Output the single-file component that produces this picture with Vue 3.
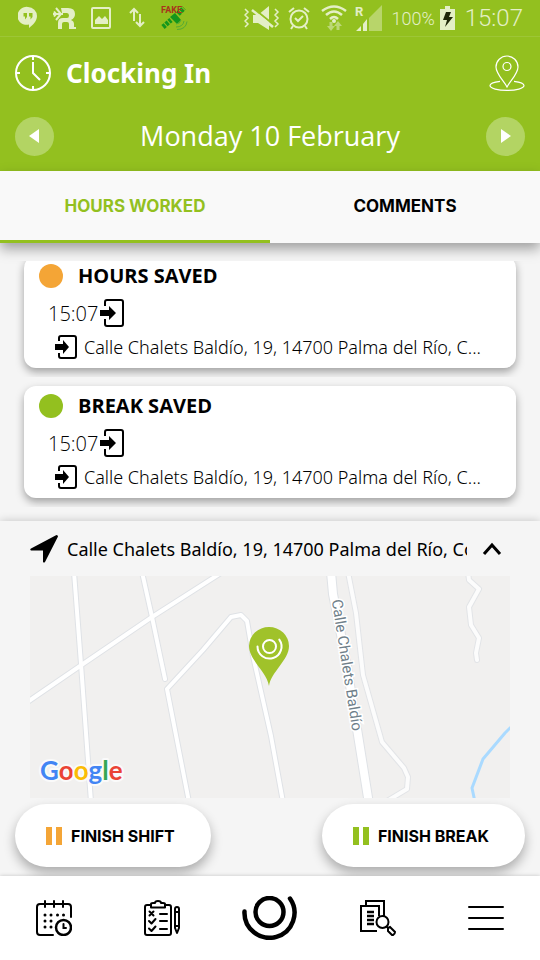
<script setup>
import { ref } from 'vue'

const tabs = ['HOURS WORKED', 'COMMENTS']
const activeTab = ref(0)

const address = 'Calle Chalets Baldío, 19, 14700 Palma del Río, '
const entries = [
  { title: 'HOURS SAVED', tone: 'orange', time: '15:07' },
  { title: 'BREAK SAVED', tone: 'green', time: '15:07' },
]
const roads = [
  'M44 -4 51 88 61 226',
  'M112 -4 122 41 131 84 135 103',
  'M194 -5 122 41 50 90 -4 127',
  'M159 226 137 113 173 74 201 41 211 39 217 45 223 80 241 160 253 226',
]
const paths = [
  'M318 -4 326 37 333 99 352 166 374 192 378 201 377 213 357 225',
  'M438 -4 439 4 449 13 439 31 441 49 449 62 446 77 447 84',
]
</script>

<template>
  <div class="app">
    <div class="status">
      <svg class="hangouts" width="20" height="24" viewBox="0 0 20 24">
        <path d="M10 1a9 9 0 0 1 9 9c0 5-4 9-8 12v-3.500A9 9 0 1 1 10 1z" fill="currentColor" />
        <path d="M5.500 7h3.500v4l-2 2.500v-3H5.500zM11 7h3.500v4l-2 2.500v-3H11z" fill="#93c01f" />
      </svg>
      <svg class="runner" width="23" height="24" viewBox="0 0 23 24" fill="none" stroke="currentColor">
        <path d="M0 8h10M3 2l5 6-5 6M1 5.500 3 8 1 10.500" stroke-width="2" />
        <path d="M8 2h7q7 0 7 6 0 4-4 6 3 1 3 4v3h2v2h-7v-5q0-2-2-2h-3q-2 0-2 2v5H5v-6q0-5 5-5h4q2 0 2-2.500T14 7H9z" fill="currentColor" stroke="none" />
      </svg>
      <svg class="picture" width="20" height="24" viewBox="0 0 20 24">
        <rect x="1" y="2" width="18" height="20" rx="1" fill="none" stroke="currentColor" stroke-width="2" />
        <path d="M4 18v-4l4-4 3 3 3-3 3 4v4z" fill="currentColor" />
      </svg>
      <svg class="transfer" width="16" height="24" viewBox="0 0 16 24" fill="none" stroke="currentColor" stroke-width="2">
        <path d="M5 15V4M1 7l4-4 4 4M11 8v11M7 16l4 4 4-4" />
      </svg>
      <svg class="satellite" width="28" height="26" viewBox="0 0 28 26">
        <path d="m2 22 8-7M17 9l6-6" stroke="#14961c" stroke-width="5" stroke-dasharray="3 1" />
        <path d="m9 12 5-4 6 7-4 4z" fill="#14961c" />
        <path d="M15 19q4 0 5-4M15 22q7 0 8-6M16 24.500q9 0 10-8" fill="none" stroke="#55aa35" />
        <text class="fake" x="0" y="8">FAKE</text>
      </svg>
      <span class="spacer"></span>
      <svg class="mute" width="36" height="26" viewBox="0 0 36 26">
        <path d="M1 4l3 3-3 3 3 3-3 3 3 3-3 3M31 4l3 3-3 3 3 3-3 3 3 3-3 3" fill="none" stroke="currentColor" stroke-width="1.500" />
        <path d="M9 10h5L25 1v24l-11-7H9z" fill="currentColor" />
        <path d="M9 3l21 17" stroke="#93c01f" stroke-width="2" />
        <path d="M8 5l21 17" stroke="currentColor" stroke-width="2.500" />
      </svg>
      <svg class="alarm" width="22" height="24" viewBox="0 0 22 24" fill="none" stroke="currentColor" stroke-width="2">
        <circle cx="11" cy="13" r="8.500" />
        <path d="M1 6l5-4M21 6l-5-4M5 20l-2 3M17 20l2 3M7 12l3 3 5-5" />
      </svg>
      <svg class="wifi" width="26" height="26" viewBox="0 0 26 26" fill="none" stroke="currentColor">
        <path d="M1 6q12-9 24 0M5 10q8-7 16 0M9 14q4-4 8 0" stroke-width="2.500" />
        <circle cx="13" cy="16" r="2" fill="currentColor" stroke="none" />
        <path d="M6 21l4 5 4-5h-2.500v-4h-3v4zM13 21l4-5 4 5h-2.500v4h-3v-4z" fill="#bcd876" stroke="none" />
      </svg>
      <svg class="signal" width="28" height="26" viewBox="0 0 28 26">
        <path d="M14 13 27 0v26H14z" fill="#b8d56a" />
        <path d="M8 19l4-5v12H8zM1 26l5-5v5z" fill="currentColor" />
        <text class="roaming" x="0" y="11">R</text>
      </svg>
      <span class="percent">100%</span>
      <svg class="battery" width="15" height="24" viewBox="0 0 15 24">
        <path d="M5 0h5v3h5v21H0V3h5z" fill="currentColor" />
        <path d="M6 6h5l-2 5h4L5 21l2-7H3z" fill="#1d2608" />
      </svg>
      <span class="clock">15:07</span>
    </div>

    <header class="header">
      <div class="title-row">
        <svg width="36" height="36" viewBox="0 0 36 36" fill="none" stroke="#fff" stroke-width="2">
          <circle cx="18" cy="18" r="17" />
          <path d="M18 1v4M18 31v4M1 18h4M31 18h4M18 7v11l7 7" />
        </svg>
        <h1>Clocking In</h1>
        <a href="#location" aria-label="Location">
          <svg width="36" height="36" viewBox="0 0 36 36" fill="none" stroke="#fff" stroke-width="1.200">
            <path d="M18 32C15 26 7 19 7 12a11 11 0 0 1 22 0c0 7-8 14-11 20z" />
            <circle cx="18" cy="11.500" r="4" />
            <path d="M11 26.300C5 27 1 28.500 1 30.500c0 3 8 4.900 17 4.900s17-1.900 17-4.900c0-2-4-3.500-10-4.200" />
          </svg>
        </a>
      </div>
      <div class="date-row">
        <button class="round" aria-label="Previous day">
          <svg width="12" height="14" viewBox="0 0 12 14"><path d="M10 0v14L0 7z" fill="#fff" /></svg>
        </button>
        <span class="date">Monday 10 February</span>
        <button class="round" aria-label="Next day">
          <svg width="10" height="14" viewBox="0 0 10 14"><path d="M0 0v14l10-7z" fill="#fff" /></svg>
        </button>
      </div>
    </header>

    <nav class="tabs">
      <button
        v-for="(tab, i) in tabs"
        :key="tab"
        class="tab"
        :class="{ active: i === activeTab }"
        @click="activeTab = i"
      >{{ tab }}</button>
    </nav>

    <main class="list">
      <div v-for="entry in entries" :key="entry.title" class="item">
        <article class="card">
          <div class="card-head">
            <span class="dot" :class="entry.tone"></span>
            <h2>{{ entry.title }}</h2>
          </div>
          <div class="card-time">
            <span>{{ entry.time }}</span>
            <svg width="24" height="28" viewBox="0 0 24 28">
              <path d="M5 7V3q0-2 2-2h14q2 0 2 2v22q0 2-2 2H7q-2 0-2-2v-5" fill="none" stroke="#000" stroke-width="2" />
              <path d="M0 11h9V7l7 7-7 7v-4H0z" />
            </svg>
          </div>
          <div class="card-address">
            <svg width="22" height="24" viewBox="0 0 22 24">
              <path d="M4 6V3q0-2 2-2h13q2 0 2 2v18q0 2-2 2H6q-2 0-2-2v-3" fill="none" stroke="#000" stroke-width="2" />
              <path d="M0 9h8V5l6 7-6 7v-4H0z" />
            </svg>
            <span>{{ address }}C...</span>
          </div>
        </article>
      </div>
    </main>

    <section class="panel">
      <div class="place">
        <svg width="28" height="28" viewBox="0 0 28 28">
          <path d="M26.500 0Q28 0 28 1.500L15 27q-1 1-2 0V15.500H1q-1.500-1 0-2z" />
        </svg>
        <span class="place-text">{{ address }}Córdoba</span>
        <button class="collapse" aria-label="Collapse map">
          <svg width="20" height="14" viewBox="0 0 20 14" fill="none" stroke="#000" stroke-width="3">
            <path d="M2 12l8-9 8 9" />
          </svg>
        </button>
      </div>
      <svg class="map" viewBox="0 0 480 222">
        <rect width="480" height="222" fill="#f1f0ef" />
        <g fill="none" stroke-linejoin="round" stroke-linecap="round">
          <path v-for="d in roads" :key="d" :d="d" stroke="#dfe2e6" stroke-width="6" />
          <path v-for="d in paths" :key="d" :d="d" stroke="#e2e4e7" stroke-width="6" />
          <path d="M301 -4 303 18 316 84 339 228" stroke="#dfe2e6" stroke-width="10" />
          <path v-for="d in roads" :key="d" :d="d" stroke="#fff" stroke-width="4" />
          <path v-for="d in paths" :key="d" :d="d" stroke="#fcfcfc" stroke-width="4" />
          <path d="M301 -4 303 18 316 84 339 228" stroke="#fff" stroke-width="8" />
          <path d="M484 148 475 157 453 183 442 212 445 226" stroke="#aadaff" stroke-width="3" />
        </g>
        <text class="street" transform="translate(317 89) rotate(81)" y="5">Calle Chalets Baldío</text>
        <path d="M239 110C237 96 219 84 219 70a20 19 0 0 1 40 0c0 14-18 26-20 40z" fill="#a0c22a" />
        <g fill="none" stroke="#fff" stroke-width="2" stroke-linecap="round">
          <circle cx="239.500" cy="70.500" r="6.500" />
          <path d="M227.500 70.500A12 12 0 1 0 249.300 63.600" />
        </g>
        <text class="google" x="10" y="204"><tspan fill="#4285f4">G</tspan><tspan fill="#ea4335">o</tspan><tspan fill="#fbbc05">o</tspan><tspan fill="#4285f4">g</tspan><tspan fill="#34a853">l</tspan><tspan fill="#ea4335">e</tspan></text>
      </svg>
      <div class="actions">
        <button class="pill">
          <svg class="orange" width="16" height="18" viewBox="0 0 16 18"><path d="M0 0h6v18H0zM10 0h6v18h-6z" fill="currentColor" /></svg>
          <span>FINISH SHIFT</span>
        </button>
        <button class="pill">
          <svg class="green" width="16" height="18" viewBox="0 0 16 18"><path d="M0 0h6v18H0zM10 0h6v18h-6z" fill="currentColor" /></svg>
          <span>FINISH BREAK</span>
        </button>
      </div>
    </section>

    <nav class="bottom">
      <a class="nav-item" href="#calendar" aria-label="Calendar">
        <svg width="36" height="36" viewBox="0 0 36 36" fill="none" stroke="#000" stroke-width="2" stroke-linecap="round">
          <path d="M17 35H4q-3 0-3-3V7q0-3 3-3h28q3 0 3 3v10M9 1v6M18 1v6M27 1v6" />
          <path d="M9 15h.010M15 15h.010M21.500 15h.010M27.500 15h.010M9 21h.010M15 21h.010M9 27h.010M15 27h.010" stroke-width="3" />
          <circle cx="27.500" cy="27.500" r="7.500" stroke-width="2.500" />
          <path d="M27.500 24v4H30" />
        </svg>
      </a>
      <a class="nav-item" href="#tasks" aria-label="Tasks">
        <svg width="36" height="36" viewBox="0 0 36 36" fill="none" stroke="#000" stroke-width="2" stroke-linecap="round" stroke-linejoin="round">
          <path d="M7 5H3Q1 5 1 7v26q0 2 2 2h22q2 0 2-2V7q0-2-2-2h-4" />
          <path d="M7 7.500V4q0-1 2-1h2q0-2 3-2t3 2h2q2 0 2 1v3.500z" />
          <path d="M5.500 11.500l4 4M9.500 11.500l-4 4M5 21l2.500 2.500L11.500 19M5 28.500 7.500 31l4-4.500M16 14h7M16 21h7M16 29h7" />
          <path d="M31 28V9q0-2 2-2t2 2v19l-2 5zM31 12h4M31 26h4" />
        </svg>
      </a>
      <a class="nav-item" href="#home" aria-label="Home">
        <svg width="56" height="44" viewBox="0 0 56 44" fill="none" stroke="#000" stroke-linecap="round">
          <circle cx="27.500" cy="16" r="14" stroke-width="4.500" />
          <path d="M2.500 15.500A25 25 0 1 0 48 2.500" stroke-width="4.500" />
        </svg>
      </a>
      <a class="nav-item" href="#reports" aria-label="Reports">
        <svg width="36" height="36" viewBox="0 0 36 36" fill="none" stroke="#000" stroke-width="2">
          <path d="M6 5V1h18v16M17 31H1V6h18v10" />
          <path d="M7 12h7M7 16h7M7 20h7M7 24h7" stroke-width="2.400" />
          <circle cx="22.500" cy="22" r="6" />
          <path d="M26.500 26.500l2 2" />
          <path d="M28 28l2-1 5 5q0 2-2 3h-1l-4-4z" />
        </svg>
      </a>
      <button class="nav-item" aria-label="Menu">
        <svg width="36" height="26" viewBox="0 0 36 26" fill="none" stroke="#000" stroke-width="2" stroke-linecap="round">
          <path d="M1 2h34M1 13h34M1 24h34" />
        </svg>
      </button>
    </nav>
  </div>
</template>

<style>
body {
  margin: 0;
}
</style>

<style scoped>
.app {
  display: flex;
  flex-direction: column;
  height: 100vh;
  overflow: hidden;
  background: #f5f5f5;
  color: #000;
  font-family: "Open Sans", "Noto Sans", sans-serif;
}
svg {
  display: block;
  flex: none;
}
button {
  border: 0;
  padding: 0;
  background: none;
  color: inherit;
  font: inherit;
  cursor: pointer;
}
h1,
h2 {
  margin: 0;
}

.status {
  display: flex;
  align-items: center;
  flex: none;
  height: 36px;
  padding: 0 17px 0 18px;
  border-bottom: 1px solid #9dc636;
  background: #93c01f;
  color: #e4efc6;
  font-family: Roboto, sans-serif;
}
.runner,
.picture {
  margin-left: 15px;
}
.transfer {
  margin-left: 18px;
}
.satellite {
  margin-left: 16px;
}
.fake {
  fill: #a8341c;
  font-size: 9px;
  font-weight: 700;
}
.roaming {
  fill: currentColor;
  font-size: 13px;
  font-weight: 700;
}
.spacer {
  flex: 1;
}
.alarm,
.signal,
.percent {
  margin-left: 8px;
}
.wifi {
  margin-left: 11px;
}
.battery {
  margin-left: 5px;
}
.percent {
  font-size: 18px;
  font-weight: 300;
}
.clock {
  margin-left: 10px;
  font-size: 24px;
  font-weight: 300;
}

.header {
  flex: none;
  padding: 0 15px;
  background: #93c01f;
  color: #fff;
}
.title-row {
  display: flex;
  align-items: center;
  gap: 15px;
  height: 72px;
}
h1 {
  flex: 1;
  font-family: "Noto Sans", sans-serif;
  font-size: 26px;
  line-height: 36px;
}
.date-row {
  display: flex;
  align-items: center;
  justify-content: space-between;
  height: 54px;
  padding-bottom: 8px;
}
.date {
  font-size: 27px;
  line-height: 36px;
}
.round {
  display: flex;
  align-items: center;
  justify-content: center;
  width: 39px;
  height: 39px;
  border-radius: 50%;
  background: #b3d463;
}

.tabs {
  display: flex;
  flex: none;
  height: 72px;
  background: #f9f9f9;
  box-shadow: 0 6px 12px rgba(0, 0, 0, 0.35);
}
.tab {
  flex: 1;
  border-bottom: 3px solid transparent;
  font-family: Inter, sans-serif;
  font-size: 17px;
  font-weight: 700;
}
.tab.active {
  border-bottom-color: #93c01f;
  color: #93c01f;
}

.list {
  display: flex;
  flex: 1;
  flex-direction: column;
  justify-content: flex-end;
  min-height: 0;
  margin: 18px 15px 14px;
  overflow: hidden;
}
.item {
  flex: none;
  padding: 9px;
  overflow: hidden;
}
.card {
  padding: 4px 15px 8px;
  border-radius: 12px;
  background: #fff;
  box-shadow: 0 4px 9px rgba(0, 0, 0, 0.35);
}
.card-head {
  display: flex;
  align-items: center;
  gap: 15px;
  height: 32px;
}
.dot {
  width: 24px;
  height: 24px;
  border-radius: 50%;
  background: currentColor;
}
.orange {
  color: #f4a536;
}
.green {
  color: #93c01f;
}
h2 {
  font-size: 20px;
  line-height: 26px;
}
.card-time {
  display: flex;
  align-items: center;
  gap: 2px;
  height: 42px;
  padding-left: 9px;
  font-size: 20px;
  font-weight: 300;
}
.card-address {
  display: flex;
  align-items: center;
  gap: 7px;
  height: 26px;
  padding-left: 16px;
  font-family: "Noto Sans", sans-serif;
  font-size: 18px;
  font-weight: 300;
  white-space: nowrap;
}

.panel {
  flex: none;
  padding: 0 15px 9px;
  box-shadow: 0 0 9px rgba(0, 0, 0, 0.2);
  background: #f5f5f5;
}
.place {
  display: flex;
  align-items: center;
  height: 55px;
  padding: 0 23px 0 15px;
}
.place-text {
  flex: 1;
  min-width: 0;
  margin: 0 15px 0 9px;
  overflow: hidden;
  font-family: "Noto Sans", sans-serif;
  font-size: 18px;
  white-space: nowrap;
}
.map {
  width: calc(100% - 30px);
  height: auto;
  margin: 0 15px 6px;
}
.street {
  fill: #6f7f8a;
  stroke: #fff;
  stroke-width: 3px;
  paint-order: stroke;
  font-family: Roboto, sans-serif;
  font-size: 15px;
  text-anchor: middle;
}
.google {
  stroke: #fafafa;
  stroke-width: 4px;
  stroke-linejoin: round;
  paint-order: stroke;
  font-family: Lato, sans-serif;
  font-size: 26px;
  font-weight: 700;
}
.actions {
  display: flex;
  justify-content: space-between;
}
.pill {
  display: flex;
  align-items: center;
  gap: 9px;
  height: 63px;
  padding: 0 36px 0 31px;
  border-radius: 32px;
  background: #fff;
  box-shadow: 0 6px 12px rgba(0, 0, 0, 0.3);
  font-family: Inter, sans-serif;
  font-size: 16px;
  font-weight: 700;
}

.bottom {
  position: relative;
  display: flex;
  flex: none;
  height: 84px;
  background: #fff;
  box-shadow: 0 0 4px rgba(0, 0, 0, 0.2);
}
.nav-item {
  display: flex;
  flex: 1;
  align-items: center;
  justify-content: center;
}
</style>
